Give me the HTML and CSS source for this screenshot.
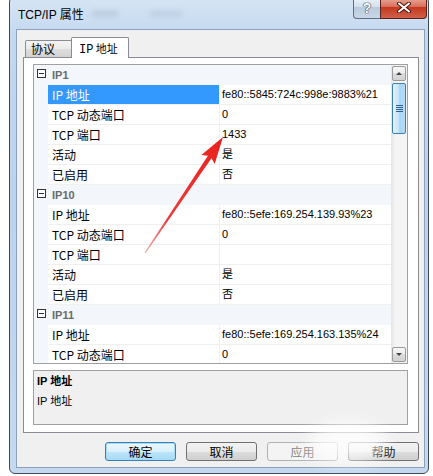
FILE: index.html
```html
<!DOCTYPE html>
<html>
<head>
  <title>TCP/IP 属性</title>
  <link rel="stylesheet" href="styles.css">
</head>
<body>
  <div class="window">
    <div class="titlebar">
      <span class="title">TCP/IP 属性</span>
      <div class="ghost ghost-a"></div>
      <div class="ghost ghost-b"></div>
      <div class="caption">
        <div class="cap help">?</div>
        <div class="cap close">
          <svg width="14" height="11" viewBox="0 0 14 11">
            <path d="M2 1.5 L12 9.5 M12 1.5 L2 9.5" stroke="#4a1a12" stroke-width="4" stroke-linecap="round"/>
            <path d="M2 1.5 L12 9.5 M12 1.5 L2 9.5" stroke="#fff" stroke-width="2" stroke-linecap="round"/>
          </svg>
        </div>
      </div>
    </div>

    <div class="client">
      <div class="tabs">
        <div class="tab">协议</div>
        <div class="tab active"><span class="mono">IP</span> 地址</div>
      </div>

      <div class="panel">
        <div class="grid">
          <div class="rows">
            <div class="cat"><span class="toggle"></span>IP1</div>
            <div class="prop selected"><div class="gutter"></div><div class="name">IP 地址</div><div class="value">fe80::5845:724c:998e:9883%21</div></div>
            <div class="prop"><div class="gutter"></div><div class="name">TCP 动态端口</div><div class="value">0</div></div>
            <div class="prop"><div class="gutter"></div><div class="name">TCP 端口</div><div class="value">1433</div></div>
            <div class="prop"><div class="gutter"></div><div class="name">活动</div><div class="value">是</div></div>
            <div class="prop"><div class="gutter"></div><div class="name">已启用</div><div class="value">否</div></div>

            <div class="cat"><span class="toggle"></span>IP10</div>
            <div class="prop"><div class="gutter"></div><div class="name">IP 地址</div><div class="value">fe80::5efe:169.254.139.93%23</div></div>
            <div class="prop"><div class="gutter"></div><div class="name">TCP 动态端口</div><div class="value">0</div></div>
            <div class="prop"><div class="gutter"></div><div class="name">TCP 端口</div><div class="value"></div></div>
            <div class="prop"><div class="gutter"></div><div class="name">活动</div><div class="value">是</div></div>
            <div class="prop"><div class="gutter"></div><div class="name">已启用</div><div class="value">否</div></div>

            <div class="cat"><span class="toggle"></span>IP11</div>
            <div class="prop"><div class="gutter"></div><div class="name">IP 地址</div><div class="value">fe80::5efe:169.254.163.135%24</div></div>
            <div class="prop"><div class="gutter"></div><div class="name">TCP 动态端口</div><div class="value">0</div></div>
          </div>
          <div class="scrollbar">
            <div class="sb-btn"><span class="tri up"></span></div>
            <div class="thumb"><span></span><span></span><span></span><span></span></div>
            <div class="track"></div>
            <div class="sb-btn"><span class="tri down"></span></div>
          </div>
        </div>

        <div class="desc">
          <div class="desc-title">IP 地址</div>
          <div>IP 地址</div>
        </div>
      </div>

      <div class="buttons">
        <div class="button default">确定</div>
        <div class="button">取消</div>
        <div class="button disabled">应用</div>
        <div class="button">帮助</div>
      </div>
    </div>
  </div>

  <div class="watermark"></div>

  <svg class="arrow" width="433" height="476" viewBox="0 0 433 476">
    <defs>
      <linearGradient id="red" x1="223" y1="137" x2="145" y2="253" gradientUnits="userSpaceOnUse">
        <stop offset="0" stop-color="#e8221e"/>
        <stop offset="0.7" stop-color="#ee3a36"/>
        <stop offset="1" stop-color="#f7a8a6"/>
      </linearGradient>
    </defs>
    <polygon fill="url(#red)" points="223,137 214.7,163.9 211.5,158.2 145.5,253.3 144.5,252.7 207.9,155.8 201.4,155.1"/>
  </svg>
</body>
</html>
```

FILE: styles.css
```css
body {
  margin: 0;
  width: 433px;
  height: 476px;
  overflow: hidden;
  position: relative;
  background-color: #fff;
  font-family: "Noto Sans CJK SC", sans-serif;
  font-size: 12px;
  color: #000;
}

.window {
  margin: -4px 0 0 9px;
  width: 420px;
  height: 478px;
  box-sizing: border-box;
  border: 1px solid #3f4a58;
  border-radius: 6px;
  padding: 0 3px 5px 6px;
  background: linear-gradient(#d6e5f5, #c2d8ef 40px, #bcd3ec 200px, #c4d9ef);
  display: flex;
  flex-direction: column;
}

.titlebar {
  height: 32px;
  display: flex;
  align-items: flex-start;
}

.title {
  margin: 8px 0 0 2px;
  line-height: 20px;
  font-family: "Liberation Sans", "Noto Sans CJK SC", sans-serif;
  font-size: 12px;
}

.ghost {
  margin-top: 13px;
  height: 7px;
  background-color: #8b9cb0;
  filter: blur(2.5px);
  opacity: 0.25;
}

.ghost-a {
  width: 26px;
  margin-left: 8px;
}

.ghost-b {
  width: 32px;
  margin-left: 32px;
  opacity: 0.2;
}

.caption {
  margin-left: auto;
  margin-right: -2px;
  display: flex;
}

.cap {
  height: 22px;
  box-sizing: border-box;
  display: flex;
  align-items: center;
  justify-content: center;
}

.help {
  width: 27px;
  border: 1px solid #5f6d7e;
  border-top: none;
  border-right: none;
  border-radius: 0 0 0 4px;
  background: linear-gradient(#eef4fa, #d4e1ee 45%, #b9cbdd 50%, #c9d8e8);
  color: #fff;
  font-family: "Liberation Sans", sans-serif;
  font-weight: bold;
  font-size: 14px;
  text-shadow: 0 0 1px #263445, 0 0 1px #263445, 0 0 1px #263445;
}

.close {
  width: 47px;
  border: 1px solid #5a2218;
  border-top: none;
  border-radius: 0 0 4px 0;
  background: linear-gradient(#eab1a4, #d9715c 45%, #c4391f 50%, #d06049);
}

.client {
  width: 409px;
  height: 439px;
  box-sizing: border-box;
  border: 1px solid #8da2ba;
  background-color: #f0f0f0;
  display: flex;
  flex-direction: column;
}

.tabs {
  height: 27px;
  padding-left: 8px;
  display: flex;
  align-items: flex-end;
}

.tab {
  width: 47px;
  height: 17px;
  box-sizing: border-box;
  padding-left: 5px;
  border: 1px solid #898c95;
  border-bottom: none;
  border-radius: 2px 2px 0 0;
  background: linear-gradient(#f3f3f3, #ebebeb 50%, #dedede 50%, #d3d3d3);
  line-height: 16px;
  font-size: 12px;
}

.tab.active {
  width: 58px;
  height: 21px;
  margin: 0 0 -1px -1px;
  padding: 2px 0 0 7px;
  background: #fff;
  position: relative;
  z-index: 1;
  font-size: 11px;
}

.mono {
  font-family: "Liberation Mono", monospace;
  font-size: 12px;
}

.panel {
  margin: 0 5px 0 6px;
  height: 376px;
  box-sizing: border-box;
  border: 1px solid #898c95;
  background-color: #fff;
  padding: 6px 10px 7px 9px;
  display: flex;
  flex-direction: column;
}

.grid {
  height: 300px;
  box-sizing: border-box;
  border: 1px solid #a0a0a0;
  display: flex;
}

.rows {
  flex: 1;
  overflow: hidden;
}

.cat {
  height: 20px;
  background-color: #f3f6fa;
  display: flex;
  align-items: center;
  font-family: "Liberation Sans", sans-serif;
  font-weight: bold;
  font-size: 11px;
  color: #6a6a6a;
}

.toggle {
  width: 9px;
  height: 9px;
  box-sizing: border-box;
  margin: 0 6px 3px 3px;
  border: 1px solid #333;
  background: linear-gradient(#333, #333) center / 5px 1px no-repeat #fff;
}

.prop {
  height: 20px;
  box-sizing: border-box;
  border-bottom: 1px solid #f0f0f0;
  display: flex;
  line-height: 19px;
}

.gutter {
  width: 14px;
  margin-bottom: -1px;
  background-color: #f3f6fa;
}

.name {
  width: 172px;
  box-sizing: border-box;
  padding-left: 4px;
  border-right: 1px solid #f0f0f0;
  white-space: nowrap;
}

.value {
  flex: 1;
  padding-left: 2px;
  white-space: nowrap;
  overflow: hidden;
  font-family: "Liberation Sans", "Noto Sans CJK SC", sans-serif;
  font-size: 11px;
}

.prop.selected .name {
  background-color: #3399ff;
  color: #fff;
}

.scrollbar {
  width: 16px;
  box-sizing: border-box;
  padding: 1px;
  background: linear-gradient(90deg, #e6e6e6, #f4f4f4 30%, #f4f4f4);
  display: flex;
  flex-direction: column;
}

.sb-btn {
  height: 15px;
  box-sizing: border-box;
  border: 1px solid #9a9a9a;
  border-radius: 2px;
  background: linear-gradient(#f7f7f7, #ececec 50%, #dcdcdc 50%, #d2d2d2);
  display: flex;
  align-items: center;
  justify-content: center;
}

.tri {
  width: 0;
  height: 0;
  border-left: 3px solid transparent;
  border-right: 3px solid transparent;
}

.tri.up {
  border-bottom: 3px solid #444;
}

.tri.down {
  border-top: 3px solid #444;
}

.thumb {
  margin-top: 2px;
  height: 51px;
  box-sizing: border-box;
  border: 1px solid #3c7fb1;
  border-radius: 2px;
  background: linear-gradient(90deg, #e3f2fc, #c4e4f9 50%, #a9d6f5 55%, #b5dcf6);
  display: flex;
  flex-direction: column;
  align-items: center;
  justify-content: center;
  gap: 1px;
}

.thumb span {
  width: 7px;
  height: 1px;
  background-color: #2f6089;
}

.track {
  flex: 1;
}

.desc {
  margin-top: 6px;
  height: 55px;
  box-sizing: border-box;
  border: 1px solid #a0a0a0;
  background-color: #f0f0f0;
  padding-left: 3px;
  line-height: 20px;
  font-family: "Liberation Sans", "Noto Sans CJK SC", sans-serif;
  font-size: 11px;
}

.desc-title {
  font-weight: bold;
}

.buttons {
  margin-top: 9px;
  padding-right: 5px;
  display: flex;
  justify-content: flex-end;
  gap: 10px;
}

.button {
  width: 71px;
  height: 19px;
  box-sizing: border-box;
  border: 1px solid #707070;
  border-radius: 3px;
  background: linear-gradient(#f2f2f2, #ebebeb 50%, #dddddd 50%, #cfcfcf);
  text-align: center;
  line-height: 17px;
}

.button.default {
  border-color: #3c7fb1;
  background: linear-gradient(#eaf6fd, #d9f0fc 50%, #bee6fd 50%, #a7d9f5);
  box-shadow: inset 0 0 0 1px #a6dcf8;
}

.button.disabled {
  border-color: #adb2b5;
  background: #f4f4f4;
  color: #838383;
}

.watermark {
  position: absolute;
  left: 308px;
  top: 422px;
  width: 80px;
  height: 40px;
  border-radius: 50%;
  background-color: #fff;
  filter: blur(8px);
  opacity: 0.75;
}

.arrow {
  position: absolute;
  left: 0;
  top: 0;
  pointer-events: none;
}
```
